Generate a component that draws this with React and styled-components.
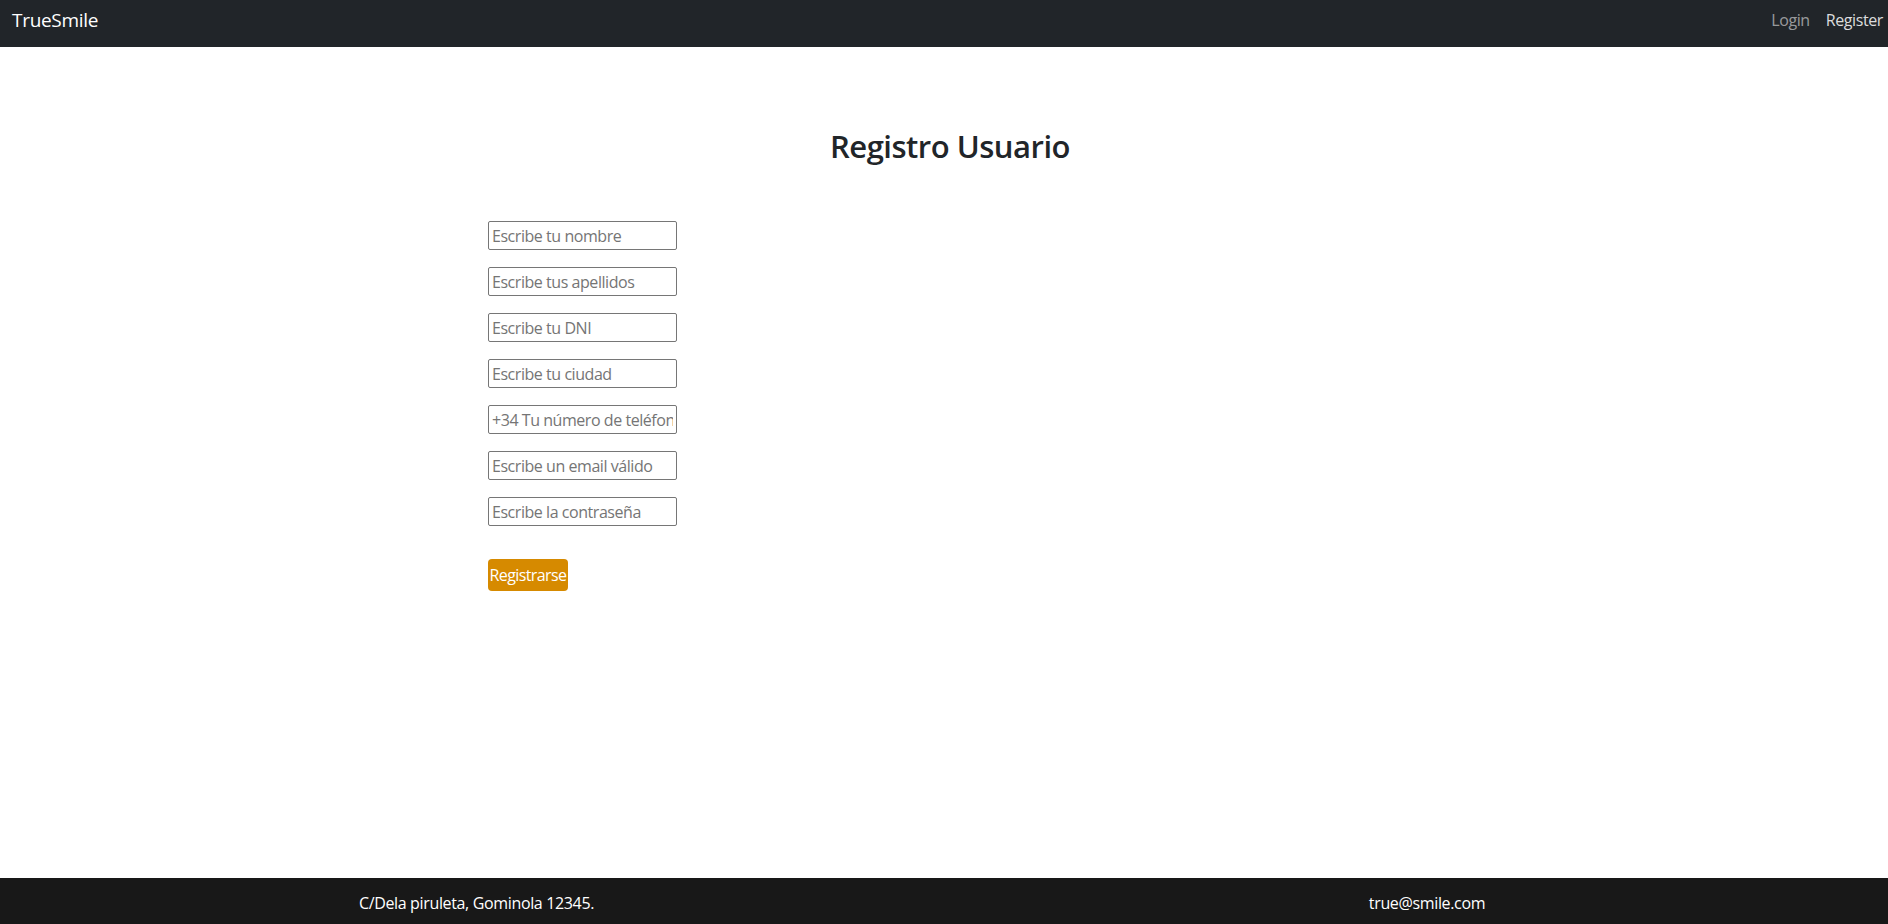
import styled, { createGlobalStyle } from "styled-components";

const GlobalStyle = createGlobalStyle`
  * { box-sizing: border-box; }
  body {
    margin: 0;
    font-family: "Open Sans", "Noto Sans", Arial, sans-serif;
    color: #212529;
    background: #fff;
  }
`;

const Page = styled.div`
  min-height: 100vh;
  display: flex;
  flex-direction: column;
`;

const Navbar = styled.nav`
  height: 47px;
  background-color: #212529;
  display: flex;
  align-items: center;
  justify-content: space-between;
  padding: 0 5px 8px 12px;
`;

const Brand = styled.span`
  color: #fff;
  font-size: 19px;
  letter-spacing: -0.3px;
`;

const NavLinks = styled.div`
  display: flex;
  gap: 16px;
`;

const NavLink = styled.span`
  font-size: 16px;
  letter-spacing: -0.4px;
  color: ${(p) => (p.active ? "rgba(255,255,255,0.85)" : "rgba(255,255,255,0.55)")};
`;

const Main = styled.main`
  flex: 1;
  padding-top: 81px;
`;

const Title = styled.h2`
  margin: 0 0 56px;
  text-align: center;
  font-size: 31px;
  font-weight: 600;
  line-height: 1.2;
  letter-spacing: -0.5px;
  padding-left: 12px;
`;

const Form = styled.form`
  display: flex;
  flex-direction: column;
  align-items: flex-start;
  gap: 17px;
  padding-left: 488px;
`;

const Input = styled.input`
  width: 189px;
  height: 29px;
  border: 1px solid #767676;
  border-radius: 2px;
  padding: 0 3px;
  font-family: "Open Sans", "Noto Sans", Arial, sans-serif;
  font-size: 16px;
  letter-spacing: -0.45px;
  &::placeholder {
    color: #757575;
  }
`;

const Button = styled.button`
  margin-top: 16px;
  height: 32px;
  width: 80px;
  padding: 0;
  border: none;
  border-radius: 4px;
  background-color: #d68a00;
  color: #fff;
  font-family: "Open Sans", "Noto Sans", Arial, sans-serif;
  font-size: 16px;
  letter-spacing: -0.6px;
`;

const Footer = styled.footer`
  height: 46px;
  background-color: #181818;
  display: grid;
  grid-template-columns: 1fr 1fr;
  align-items: center;
  color: #fff;
  font-size: 16px;
  letter-spacing: -0.35px;
  padding-top: 3px;
`;

const FooterItem = styled.span`
  text-align: center;
  padding-left: ${(p) => p.shift || 0}px;
`;

const fields = [
  { type: "text", placeholder: "Escribe tu nombre" },
  { type: "text", placeholder: "Escribe tus apellidos" },
  { type: "text", placeholder: "Escribe tu DNI" },
  { type: "text", placeholder: "Escribe tu ciudad" },
  { type: "tel", placeholder: "+34 Tu número de teléfono" },
  { type: "email", placeholder: "Escribe un email válido" },
  { type: "password", placeholder: "Escribe la contraseña" },
];

const App = () => {
  return (
    <Page>
      <GlobalStyle />
      <Navbar>
        <Brand>TrueSmile</Brand>
        <NavLinks>
          <NavLink>Login</NavLink>
          <NavLink active>Register</NavLink>
        </NavLinks>
      </Navbar>
      <Main>
        <Title>Registro Usuario</Title>
        <Form onSubmit={(e) => e.preventDefault()}>
          {fields.map((f) => (
            <Input key={f.placeholder} type={f.type} placeholder={f.placeholder} />
          ))}
          <Button type="submit">Registrarse</Button>
        </Form>
      </Main>
      <Footer>
        <FooterItem shift={9}>C/Dela piruleta, Gominola 12345.</FooterItem>
        <FooterItem shift={22}>true@smile.com</FooterItem>
      </Footer>
    </Page>
  );
};

export default App;
